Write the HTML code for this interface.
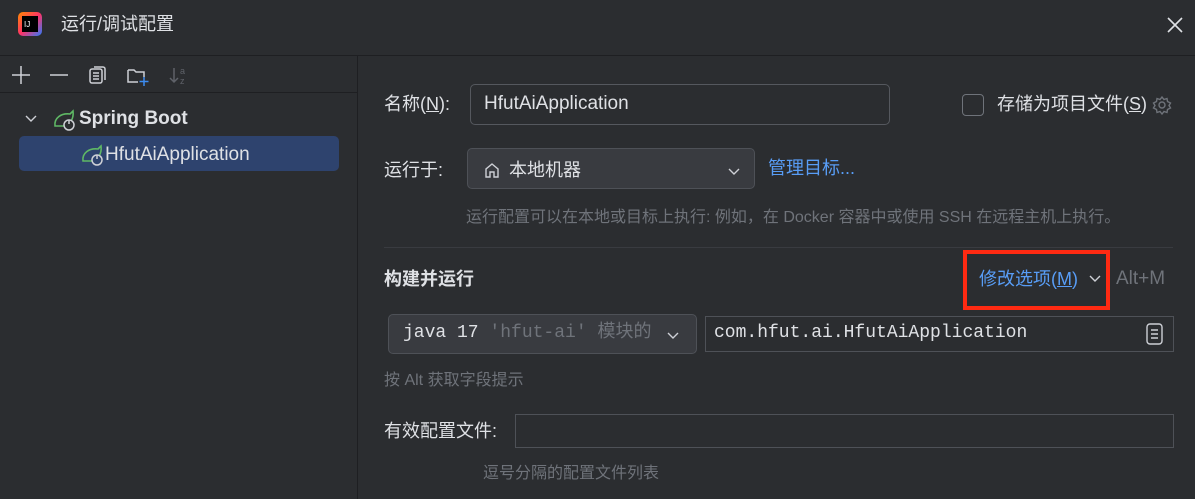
<!DOCTYPE html>
<html><head><meta charset="utf-8"><style>
*{margin:0;padding:0;box-sizing:border-box}
body{width:1195px;height:499px;background:#2b2d30;color:#dfe1e5;font-family:"Liberation Sans","Noto Sans CJK SC",sans-serif;font-size:18px;line-height:22px;position:relative;overflow:hidden}
.a{position:absolute;white-space:nowrap}
.mono{font-family:"Liberation Mono","Noto Sans CJK SC",monospace}
.box{position:absolute;border:1px solid #4e5157;border-radius:5px}
.dim{color:#6f737a}
</style></head><body>
<div class="a" style="left:18px;top:12px;width:24px;height:24px;border-radius:5px;background:linear-gradient(135deg,#ff8a00,#ff3366 50%,#2a7bff);"></div>
<div class="a" style="left:22px;top:16px;width:16px;height:16px;background:#000"></div>
<div class="a" style="left:24px;top:14px;color:#fff;font-size:8px">IJ</div>
<div class="a" style="left:61px;top:13px;font-size:18px">运行/调试配置</div>
<svg class="a" style="left:1166px;top:16px" width="18" height="18"><path d="M2 2L16 16M16 2L2 16" stroke="#dfe1e5" stroke-width="1.6"/></svg>
<div class="a" style="left:0;top:55px;width:1195px;height:1px;background:#1e1f22"></div>
<div class="a" style="left:357px;top:56px;width:1px;height:443px;background:#1e1f22"></div>
<div class="a" style="left:0;top:92px;width:357px;height:1px;background:#1e1f22"></div>
<svg class="a" style="left:8px;top:62px" width="190" height="26" fill="none" stroke="#ced0d6" stroke-width="1.5">
<path d="M4 13H22M13 4V22"/><path d="M42 13H60"/>
<rect x="82" y="7" width="12" height="14" rx="2"/><path d="M86 5h9a2 2 0 012 2v11"/><path d="M85 11h6M85 14h6M85 17h6"/>
<path d="M120 8h6l2 2h8v5M120 8v12h10"/><path d="M136 15v9M131.5 19.5h9" stroke="#3d8cf0"/>
<path d="M166 6v14M162 16l4 4 4-4" stroke="#5f6269"/><text x="172" y="12" font-size="9" fill="#5f6269" stroke="none">a</text><text x="172" y="22" font-size="9" fill="#5f6269" stroke="none">z</text>
</svg>
<svg class="a" style="left:24px;top:112px" width="14" height="14"><path d="M2 4l5 5 5-5" stroke="#ced0d6" stroke-width="1.4" fill="none"/></svg>
<svg class="a" style="left:52px;top:108px" width="26" height="24"><path d="M3 18C2 10 9 5 18 6l3-3c1 8-3 14-10 15z" fill="none" stroke="#5fb865" stroke-width="1.6"/><circle cx="17" cy="17" r="5" fill="#2b2d30" stroke="#ced0d6" stroke-width="1.5"/><path d="M17 12v4" stroke="#ced0d6" stroke-width="1.5"/></svg>
<div class="a" style="left:79px;top:108px;font-weight:bold;font-size:19px">Spring Boot</div>
<div class="a" style="left:19px;top:136px;width:320px;height:35px;background:#2e436e;border-radius:5px"></div>
<svg class="a" style="left:80px;top:143px" width="26" height="24"><path d="M3 18C2 10 9 5 18 6l3-3c1 8-3 14-10 15z" fill="none" stroke="#5fb865" stroke-width="1.6"/><circle cx="17" cy="17" r="5" fill="#2e436e" stroke="#ced0d6" stroke-width="1.5"/><path d="M17 12v4" stroke="#ced0d6" stroke-width="1.5"/></svg>
<div class="a" style="left:105px;top:144px;font-size:19px">HfutAiApplication</div>
<div class="a" style="left:384px;top:93px">名称(<u>N</u>):</div>
<div class="box" style="left:470px;top:84px;width:420px;height:41px;border-color:#55585e"></div>
<div class="a" style="left:484px;top:93px;font-size:19px">HfutAiApplication</div>
<div class="box" style="left:962px;top:94px;width:22px;height:22px;border-color:#6f737a;border-radius:4px"></div>
<div class="a" style="left:997px;top:93px">存储为项目文件(<u>S</u>)</div>
<svg class="a" style="left:1152px;top:95px" width="20" height="20" fill="none" stroke="#6f737a" stroke-width="1.4"><circle cx="10" cy="10" r="3"/><path d="M10 2l2 2.5 3-1 .5 3 3 1.5-1.5 2.5 1.5 2.5-3 1.5-.5 3-3-1-2 2.5-2-2.5-3 1-.5-3-3-1.5 1.5-2.5L1.5 8l3-1.5.5-3 3 1z"/></svg>
<div class="a" style="left:384px;top:159px">运行于:</div>
<div class="box" style="left:467px;top:148px;width:288px;height:41px;background:#393b40;border-color:#4e5157"></div>
<svg class="a" style="left:483px;top:161px" width="18" height="18" fill="none" stroke="#ced0d6" stroke-width="1.4"><path d="M3 16V8l6-5 6 5v8h-4v-5H7v5z"/></svg>
<div class="a" style="left:509px;top:159px">本地机器</div>
<svg class="a" style="left:727px;top:164px" width="14" height="14"><path d="M2 5l5 5 5-5" stroke="#ced0d6" stroke-width="1.4" fill="none"/></svg>
<div class="a" style="left:768px;top:157px;color:#589df6">管理目标...</div>
<div class="a dim" style="left:466px;top:207px;font-size:16px">运行配置可以在本地或目标上执行: 例如，在 Docker 容器中或使用 SSH 在远程主机上执行。</div>
<div class="a" style="left:384px;top:247px;width:789px;height:1px;background:#393b40"></div>
<div class="a" style="left:384px;top:268px;font-weight:bold">构建并运行</div>
<div class="a" style="left:963px;top:250px;width:147px;height:60px;border:4px solid #ff2a12"></div>
<div class="a" style="left:979px;top:268px;color:#589df6">修改选项(<u>M</u>)</div>
<svg class="a" style="left:1088px;top:271px" width="14" height="14"><path d="M2 5l5 5 5-5" stroke="#ced0d6" stroke-width="1.4" fill="none"/></svg>
<div class="a dim" style="left:1116px;top:268px;font-size:19px">Alt+M</div>
<div class="box" style="left:388px;top:314px;width:309px;height:40px;background:#393b40"></div>
<div class="a mono" style="left:403px;top:322px;font-size:18px">java 17 <span class="dim">'hfut-ai' 模块的</span></div>
<svg class="a" style="left:666px;top:328px" width="14" height="14"><path d="M2 5l5 5 5-5" stroke="#ced0d6" stroke-width="1.4" fill="none"/></svg>
<div class="box" style="left:705px;top:316px;width:469px;height:36px;border-radius:0;border-color:#4e5157"></div>
<div class="a mono" style="left:714px;top:322px;font-size:18px">com.hfut.ai.HfutAiApplication</div>
<svg class="a" style="left:1145px;top:322px" width="20" height="24" fill="none" stroke="#ced0d6" stroke-width="1.4"><rect x="2" y="2" width="15" height="20" rx="3"/><path d="M6 8h7M6 12h7M6 16h7"/></svg>
<div class="a dim" style="left:384px;top:370px;font-size:16px">按 Alt 获取字段提示</div>
<div class="a" style="left:384px;top:420px">有效配置文件:</div>
<div class="box" style="left:515px;top:414px;width:659px;height:34px;border-radius:0"></div>
<div class="a dim" style="left:483px;top:463px;font-size:16px">逗号分隔的配置文件列表</div>
</body></html>
